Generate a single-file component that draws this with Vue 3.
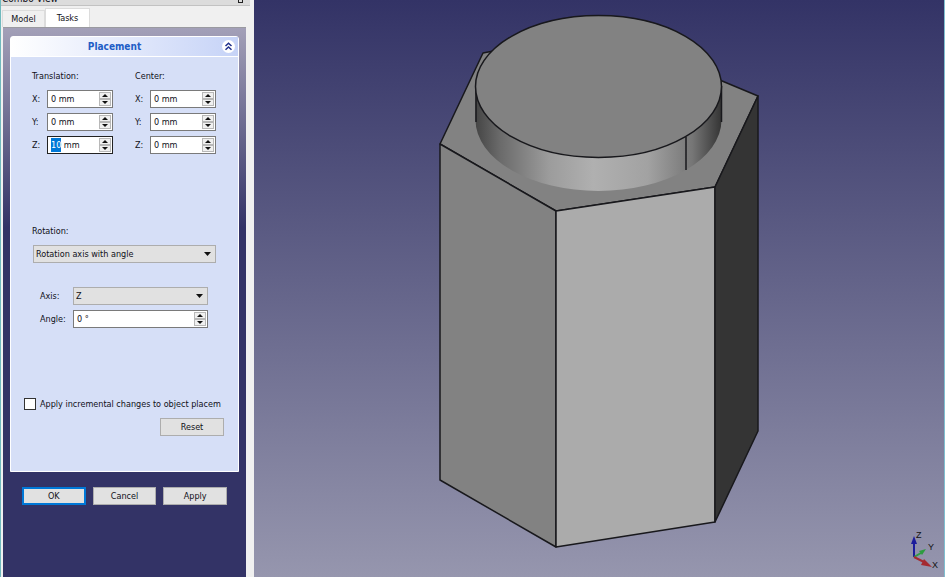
<script setup>
import { onMounted, ref } from 'vue'

const groups = ref([
  { title: 'Translation:', id: 't', rows: [['X', '0 mm'], ['Y', '0 mm'], ['Z', '10 mm']] },
  { title: 'Center:', id: 'c', rows: [['X', '0 mm'], ['Y', '0 mm'], ['Z', '0 mm']] },
])
const angle = ref('0 °')
const incremental = ref(false)

onMounted(() => {
  const input = document.getElementById('t-Z')
  input.focus()
  input.setSelectionRange(0, 2)
})
</script>

<template>
  <div class="window">
    <aside class="combo">
      <header class="dock-title">
        <span>Combo View</span>
        <button class="float" aria-label="Float"></button>
      </header>
      <nav class="tabs">
        <button class="tab">Model</button>
        <button class="tab active">Tasks</button>
      </nav>
      <div class="tasks">
        <section class="panel">
          <header class="panel-head">
            <h1>Placement</h1>
            <button class="collapse" aria-label="Collapse">
              <svg viewBox="0 0 13 13"><path d="M3.5 6 6.5 3.2 9.5 6M3.5 9.8 6.5 7 9.5 9.8" /></svg>
            </button>
          </header>
          <form class="panel-body" @submit.prevent>
            <div class="vectors">
              <fieldset v-for="g in groups" :key="g.id" class="vector">
                <legend>{{ g.title }}</legend>
                <div v-for="row in g.rows" :key="row[0]" class="row">
                  <label :for="g.id + '-' + row[0]">{{ row[0] }}:</label>
                  <div class="spin">
                    <input :id="g.id + '-' + row[0]" v-model="row[1]" type="text">
                    <div class="steps">
                      <button type="button" class="up" aria-label="Increase"></button>
                      <button type="button" class="down" aria-label="Decrease"></button>
                    </div>
                  </div>
                </div>
              </fieldset>
            </div>
            <div class="rotation">
              <label for="mode">Rotation:</label>
              <div class="combo-box mode">
                <select id="mode"><option>Rotation axis with angle</option></select>
              </div>
              <div class="axis-rows">
                <div class="row">
                  <label for="axis">Axis:</label>
                  <div class="combo-box">
                    <select id="axis"><option>Z</option><option>X</option><option>Y</option></select>
                  </div>
                </div>
                <div class="row">
                  <label for="angle">Angle:</label>
                  <div class="spin">
                    <input id="angle" v-model="angle" type="text">
                    <div class="steps">
                      <button type="button" class="up" aria-label="Increase"></button>
                      <button type="button" class="down" aria-label="Decrease"></button>
                    </div>
                  </div>
                </div>
              </div>
            </div>
            <label class="check">
              <input v-model="incremental" type="checkbox">
              <span>Apply incremental changes to object placem</span>
            </label>
            <button type="button" class="btn reset">Reset</button>
          </form>
        </section>
        <div class="actions">
          <button class="btn default">OK</button>
          <button class="btn">Cancel</button>
          <button class="btn">Apply</button>
        </div>
      </div>
    </aside>

    <main class="view">
      <svg class="model" viewBox="254 0 690 577">
        <defs>
          <linearGradient id="side" x1="475" x2="722" y1="0" y2="0" gradientUnits="userSpaceOnUse">
            <stop offset="0" stop-color="#444" />
            <stop offset="0.1" stop-color="#6a6a6a" />
            <stop offset="0.3" stop-color="#9c9c9c" />
            <stop offset="0.48" stop-color="#b0b0b0" />
            <stop offset="0.7" stop-color="#a2a2a2" />
            <stop offset="0.88" stop-color="#767676" />
            <stop offset="1" stop-color="#333" />
          </linearGradient>
        </defs>
        <g class="edges">
          <path fill="#828282" d="M440 144 483 53 600 30 758 96 715 187 556 211Z" />
          <path fill="#828282" d="M440 144 556 211V547L440 480Z" />
          <path fill="#ababab" d="M556 211 715 187V522L556 547Z" />
          <path fill="#343434" d="M715 187 758 96V431L715 522Z" />
        </g>
        <path fill="url(#side)" d="M475.500 86V120A123 71 0 0 0 721.500 120V86Z" />
        <g class="edges">
          <path d="M476 86V122M721.500 86V122M686 137V170" />
          <ellipse cx="598.500" cy="86.500" rx="123" ry="71" fill="#828282" />
        </g>
      </svg>
      <svg class="gizmo" viewBox="0 0 32 46">
        <path stroke="#1c1c9c" stroke-width="2" d="M6 26V9" />
        <path fill="#1c1c9c" d="M3 13 6 5 9 13Z" />
        <path stroke="#2d9c40" stroke-width="2" d="M6 26 13 22" />
        <path fill="#2d9c40" d="M11 20 18 18 14 24Z" />
        <path stroke="#a52a30" stroke-width="2" d="M6 26 18 32" />
        <path fill="#a52a30" d="M16 28 24 36 13 34Z" />
        <text x="8" y="7">Z</text>
        <text x="20" y="19">Y</text>
        <text x="24" y="37">X</text>
      </svg>
    </main>
  </div>
</template>

<style>
body {
  margin: 0;
}
</style>

<style scoped>
.window {
  display: grid;
  grid-template-columns: 254px 1fr;
  height: 100vh;
  overflow: hidden;
  font: 9px/14px "DejaVu Sans Condensed", "DejaVu Sans", sans-serif;
  color: #101018;
}
.window * { box-sizing: border-box; }
button, input, select {
  font: inherit;
  color: inherit;
  margin: 0;
  padding: 0;
  border: 0;
  border-radius: 0;
}
.combo {
  display: flex;
  flex-direction: column;
  padding-right: 8px;
  background: #f0f0f0;
  border-left: 1px solid #6fb9bd;
}
.dock-title {
  display: flex;
  justify-content: space-between;
  align-items: flex-end;
  height: 6px;
  margin-right: -4px;
  padding: 0 7px 2px 1px;
  background: #dcdcdc;
  border-bottom: 1px solid #c2c2c2;
}
.dock-title span {
  font-size: 10px;
  line-height: 8px;
}
.float {
  width: 5px;
  height: 5px;
  background: none;
  border: 1px solid #222;
}
.tabs {
  display: flex;
  align-items: flex-end;
  height: 21px;
  padding-left: 1px;
}
.tab {
  width: 43px;
  height: 17px;
  background: #f0f0f0;
  border: 1px solid #dcdcdc;
  border-bottom: 0;
}
.tab.active {
  width: 45px;
  height: 19px;
  background: #fff;
}
.tasks {
  flex: 1;
  margin-left: 2px;
  padding: 8px 7px 0;
  background: linear-gradient(#a3a0b8, #333366 200px);
  border-top: 1px solid #9a9aa0;
}
.panel {
  border: 1px solid #fff;
  border-radius: 3px 3px 0 0;
  background: #d6dff7;
}
.panel-head {
  display: flex;
  align-items: center;
  height: 20px;
  padding-right: 3px;
  background: linear-gradient(90deg, #fff, #c6d3f7);
  border-bottom: 1px solid #fff;
}
.panel-head h1 {
  flex: 1;
  margin: 0;
  padding-right: 4px;
  text-align: center;
  font-size: 10px;
  color: #215dc6;
}
.collapse {
  width: 13px;
  height: 13px;
  border-radius: 50%;
  background: #fff;
}
.collapse svg {
  display: block;
  fill: none;
  stroke: #20308c;
  stroke-width: 1.500;
}
.panel-body {
  display: flex;
  flex-direction: column;
  height: 414px;
  padding: 12px 14px 0 13px;
}
.vectors {
  display: flex;
  gap: 22px;
  height: 155px;
  padding: 0 8px;
}
.vector {
  flex: 1;
  min-width: 0;
  margin: 0;
  padding: 0;
  border: 0;
}
.vector legend {
  padding: 0;
  margin-bottom: 7px;
}
.row {
  display: flex;
  align-items: center;
  height: 18px;
  margin-bottom: 5px;
}
.vector label { width: 15px; }
.spin {
  flex: 1;
  display: flex;
  min-width: 0;
  height: 18px;
  padding: 1px;
  background: #fff;
  border: 1px solid #7a7a7a;
}
.spin:focus-within { border-color: #222; }
.spin input {
  flex: 1;
  min-width: 0;
  padding-left: 2px;
  background: none;
  outline: 0;
}
.spin input::selection {
  background: #0078d7;
  color: #fff;
}
.steps {
  display: flex;
  flex-direction: column;
  width: 12px;
}
.steps button {
  flex: 1;
  display: grid;
  place-items: center;
  background: #f0f0f0;
  border: 1px solid #b8b8b8;
}
.steps button::after {
  content: "";
  width: 6px;
  height: 3px;
  background: #111;
  clip-path: polygon(50% 0, 100% 100%, 0 100%);
}
.steps .down::after { clip-path: polygon(0 0, 100% 0, 50% 100%); }
.rotation {
  height: 173px;
  padding: 0 8px;
}
.combo-box {
  flex: 1;
  display: flex;
  align-items: center;
  height: 18px;
  padding-right: 4px;
  background: #e1e1e1;
  border: 1px solid #adadad;
}
.combo-box select {
  flex: 1;
  appearance: none;
  height: 16px;
  padding-left: 2px;
  background: none;
}
.combo-box::after {
  content: "";
  width: 7px;
  height: 4px;
  background: #111;
  clip-path: polygon(0 0, 100% 0, 50% 100%);
}
.mode { margin: 7px 0 24px 1px; }
.axis-rows { padding: 0 8px; }
.axis-rows label { width: 33px; }
.check {
  display: flex;
  align-items: center;
  gap: 4px;
  height: 14px;
  white-space: nowrap;
}
.check input {
  appearance: none;
  flex: none;
  width: 12px;
  height: 12px;
  background: #fff;
  border: 1px solid #333;
}
.check input:checked { background: #0078d7; }
.btn {
  width: 64px;
  height: 18px;
  background: #e1e1e1;
  border: 1px solid #adadad;
}
.reset {
  align-self: flex-end;
  margin-top: 7px;
}
.actions {
  display: flex;
  gap: 7px;
  padding: 15px 12px;
}
.default { border: 2px solid #0078d7; }
.view {
  position: relative;
  min-width: 0;
  min-height: 0;
  background: linear-gradient(#333366, #9696ae);
  border-right: 1px solid #7fbfd0;
}
.model {
  display: block;
  width: 100%;
  height: 100%;
}
.edges {
  fill: none;
  stroke: #18181c;
  stroke-width: 1.500;
  stroke-linejoin: round;
}
.gizmo {
  position: absolute;
  right: 4px;
  bottom: 0;
  width: 32px;
  height: 46px;
}
.gizmo text {
  font: 9px "Liberation Sans", sans-serif;
  fill: #111;
}
</style>
